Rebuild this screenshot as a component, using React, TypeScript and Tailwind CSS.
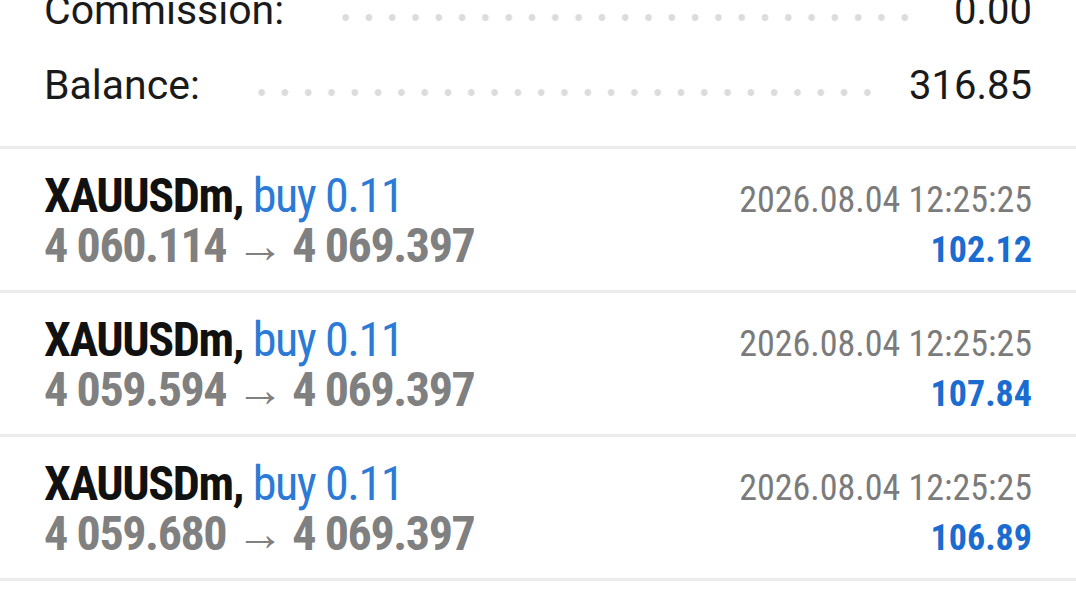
import React from 'react';

type Deal = {
  symbol: string;
  side: string;
  volume: string;
  open: string;
  close: string;
  time: string;
  profit: string;
};

const deals: Deal[] = [
  { symbol: 'XAUUSDm', side: 'buy', volume: '0.11', open: '4 060.114', close: '4 069.397', time: '2026.08.04 12:25:25', profit: '102.12' },
  { symbol: 'XAUUSDm', side: 'buy', volume: '0.11', open: '4 059.594', close: '4 069.397', time: '2026.08.04 12:25:25', profit: '107.84' },
  { symbol: 'XAUUSDm', side: 'buy', volume: '0.11', open: '4 059.680', close: '4 069.397', time: '2026.08.04 12:25:25', profit: '106.89' },
];

// summary line with dotted leader between label and value
const SummaryRow = ({ label, value }: { label: string; value: string }) => (
  <div className="flex h-[75px] items-center text-[40px] leading-[47px] text-[#1a1a1a]">
    <span className="text-[41px]">{label}</span>
    <div className="mt-[13px] mr-[38px] ml-[50px] h-[7px] flex-1 bg-[radial-gradient(circle,#dcdcdc_3.1px,transparent_3.7px)] bg-[length:23.3px_7px] bg-repeat-x" />
    <span>{value}</span>
  </div>
);

const DealRow = ({ deal }: { deal: Deal }) => (
  <div className="border-b-[3px] border-[#ebebeb] px-[44px] pt-[22px] pb-[19px] font-[family-name:'Roboto_Condensed','Liberation_Sans_Narrow',Roboto,sans-serif] font-stretch-condensed">
    <div className="flex h-[50px] items-baseline justify-between leading-[50px]">
      <span className="text-[48px] tracking-[-1.4px]">
        <span className="font-bold text-[#111]">{deal.symbol},</span>{' '}
        <span className="text-[#2b7bd6]">
          {deal.side} {deal.volume}
        </span>
      </span>
      <span className="text-[36px] text-[#7b7b7b]">{deal.time}</span>
    </div>
    <div className="flex h-[50px] items-baseline justify-between leading-[50px]">
      <span className="text-[48px] font-bold tracking-[-1.4px] text-[#808080]">
        {deal.open} <span className="font-normal">→</span> {deal.close}
      </span>
      <span className="text-[36px] font-bold text-[#1a6cd0]">{deal.profit}</span>
    </div>
  </div>
);

const App: React.FC = () => {
  return (
    <div className="h-[606px] w-[1076px] overflow-hidden bg-white font-[family-name:Roboto,sans-serif]">
      <div className="-mt-[27px] border-b-[3px] border-[#ebebeb] px-[44px] pb-[23px]">
        <SummaryRow label="Commission:" value="0.00" />
        <SummaryRow label="Balance:" value="316.85" />
      </div>
      {deals.map((d, i) => (
        <DealRow key={i} deal={d} />
      ))}
    </div>
  );
};

export default App;
